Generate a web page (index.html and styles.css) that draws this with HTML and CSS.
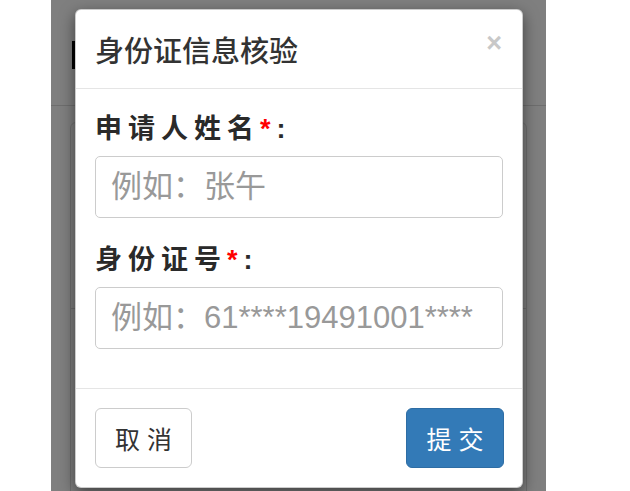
FILE: index.html
```html
<!DOCTYPE html>
<html>
  <head>
    <meta charset="UTF-8" />
    <meta name="viewport" content="width=device-width, initial-scale=1.0" />
    <title>身份证信息核验</title>
    <link rel="stylesheet" href="styles.css">
  </head>

  <body>
    <div class="screen">
      <!-- page behind the dialog -->
      <div class="page">
        <div class="page-header">
          <div class="page-title"></div>
        </div>
        <div class="card">
          <div class="card-top"></div>
        </div>
      </div>

      <div class="backdrop"></div>

      <div class="modal">
        <div class="modal-header">
          <h4 class="modal-title">身份证信息核验</h4>
          <button class="close" type="button">&times;</button>
        </div>
        <div class="modal-body">
          <div class="form-group">
            <label for="name">申请人姓名<span class="req">*</span>:</label>
            <input id="name" type="text" placeholder="例如：张午">
          </div>
          <div class="form-group">
            <label for="idno">身份证号<span class="req">*</span>:</label>
            <input id="idno" type="text" placeholder="例如：61****19491001****">
          </div>
        </div>
        <div class="modal-footer">
          <button class="btn btn-default" type="button">取 消</button>
          <button class="btn btn-primary" type="button">提 交</button>
        </div>
      </div>
    </div>
  </body>
</html>
```

FILE: styles.css
```css
* {
  padding: 0px;
  margin: 0px;
  box-sizing: border-box;
}

body {
  --text: #333333;
  --line: #e5e5e5;
  --blue: #337ab7;
  --blue-border: #2e6da4;
  background: #ffffff;
  font-family: "Liberation Sans", "Noto Sans CJK SC", sans-serif;
  color: var(--text);
  height: 491px;
  overflow: hidden;
}

.screen {
  position: relative;
  margin-left: 51px;
  width: 495px;
  height: 491px;
  background: #ffffff;
  overflow: hidden;
}

/* page under the backdrop */
.page-header {
  height: 106px;
  padding: 41px 0 0 21px;
  border-bottom: 1px solid #dddddd;
}
.page-title {
  width: 3px;
  height: 28px;
  background: #000000;
}
.card {
  margin: 16px 19px 0 19px;
  height: 400px;
  border: 1px solid #dddddd;
  border-radius: 6px;
}
.card-top {
  height: 186px;
  border-bottom: 1px solid #dddddd;
}

.backdrop {
  position: absolute;
  top: 0;
  left: 0;
  right: 0;
  bottom: 0;
  background: rgba(0, 0, 0, 0.5);
}

/* dialog */
.modal {
  position: absolute;
  left: 24px;
  top: 9px;
  width: 448px;
  background: #ffffff;
  border: 1px solid rgba(0, 0, 0, 0.2);
  border-radius: 6px;
  box-shadow: 0 5px 15px rgba(0, 0, 0, 0.5);
}

.modal-header {
  display: flex;
  align-items: center;
  justify-content: space-between;
  padding: 15px 20px 15px 19px;
  border-bottom: 1px solid var(--line);
}
.modal-title {
  font-family: "Noto Sans CJK SC", sans-serif;
  font-size: 29px;
  font-weight: 500;
  line-height: 48px;
  color: var(--text);
}
.close {
  border: none;
  background: none;
  font-family: "Liberation Sans", sans-serif;
  font-size: 27px;
  font-weight: bold;
  line-height: 1;
  color: #c8c8c8;
  margin-top: -12px;
}

.modal-body {
  padding: 20px 19px 17px 19px;
}
.form-group {
  margin-bottom: 22px;
}
.form-group label {
  display: block;
  font-size: 27px;
  font-weight: bold;
  line-height: 40px;
  letter-spacing: 6px;
  color: #2a2a2a;
  margin-bottom: 7px;
}
.req {
  color: #ff0000;
}
.form-group input {
  display: block;
  width: 100%;
  height: 62px;
  padding: 0 15px;
  border: 1px solid #cccccc;
  border-radius: 5px;
  font-family: "Liberation Sans", "Noto Sans CJK SC", sans-serif;
  font-size: 31px;
  color: var(--text);
  outline: none;
}
.form-group input::placeholder {
  color: #999999;
}

.modal-footer {
  display: flex;
  justify-content: space-between;
  align-items: center;
  padding: 19px 18px 19px 19px;
  border-top: 1px solid var(--line);
}
.btn {
  height: 60px;
  padding: 0 18px;
  border: 1px solid;
  border-radius: 6px;
  font-family: "Liberation Sans", "Noto Sans CJK SC", sans-serif;
  font-size: 25px;
}
.btn-default {
  width: 97px;
  background: #ffffff;
  border-color: #cccccc;
  color: var(--text);
}
.btn-primary {
  width: 98px;
  background: var(--blue);
  border-color: var(--blue-border);
  color: #ffffff;
}
```
